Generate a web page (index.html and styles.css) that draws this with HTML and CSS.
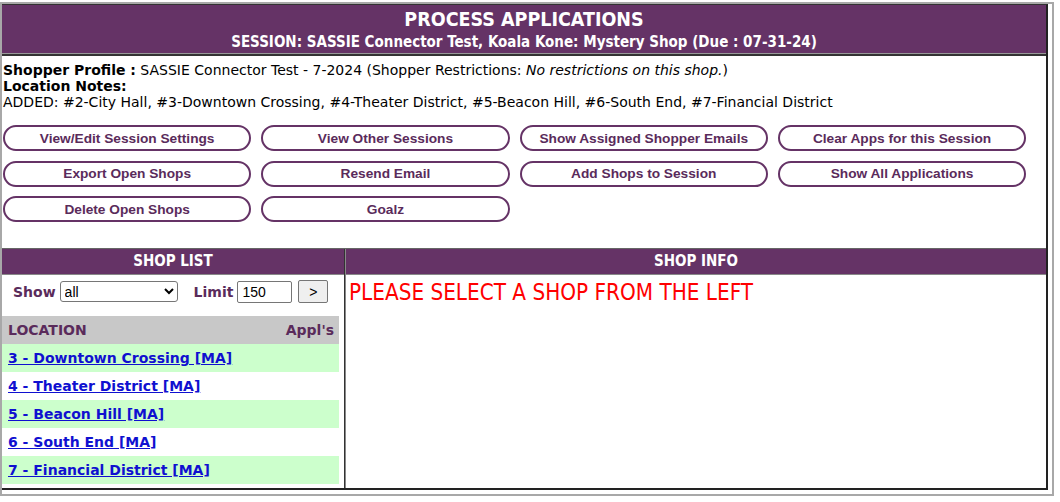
FILE: index.html
```html
<!DOCTYPE html>
<html>
<head>
<meta charset="utf-8">
<title>Process Applications</title>
<link rel="stylesheet" href="styles.css">
</head>
<body>
<div class="frame">
  <div class="main">
    <header class="hdr">
      <div class="title">PROCESS APPLICATIONS</div>
      <div class="sub">SESSION: SASSIE Connector Test, Koala Kone: Mystery Shop (Due : 07-31-24)</div>
    </header>
    <div class="info">
      <div><b>Shopper Profile :</b> SASSIE Connector Test - 7-2024 (Shopper Restrictions: <i>No restrictions on this shop.</i>)</div>
      <div><b>Location Notes:</b></div>
      <div>ADDED: #2-City Hall, #3-Downtown Crossing, #4-Theater District, #5-Beacon Hill, #6-South End, #7-Financial District</div>
    </div>
    <div class="buttons">
      <button class="btn">View/Edit Session Settings</button>
      <button class="btn">View Other Sessions</button>
      <button class="btn">Show Assigned Shopper Emails</button>
      <button class="btn">Clear Apps for this Session</button>
      <button class="btn">Export Open Shops</button>
      <button class="btn">Resend Email</button>
      <button class="btn">Add Shops to Session</button>
      <button class="btn">Show All Applications</button>
      <button class="btn">Delete Open Shops</button>
      <button class="btn">Goalz</button>
    </div>
    <div class="panels">
      <section class="left">
        <div class="phdr">SHOP LIST</div>
        <div class="controls">
          <label class="lbl">Show</label>
          <select class="sel"><option>all</option></select>
          <label class="lbl lim">Limit</label>
          <input class="inp" type="text" value="150">
          <button class="go">&gt;</button>
        </div>
        <div class="list">
          <div class="lhead"><span>LOCATION</span><span>Appl's</span></div>
          <div class="row g"><a href="#">3 - Downtown Crossing [MA]</a></div>
          <div class="row"><a href="#">4 - Theater District [MA]</a></div>
          <div class="row g"><a href="#">5 - Beacon Hill [MA]</a></div>
          <div class="row"><a href="#">6 - South End [MA]</a></div>
          <div class="row g"><a href="#">7 - Financial District [MA]</a></div>
        </div>
      </section>
      <section class="right">
        <div class="phdr">SHOP INFO</div>
        <div class="msg">PLEASE SELECT A SHOP FROM THE LEFT</div>
      </section>
    </div>
  </div>
</div>
</body>
</html>
```
FILE: styles.css
```css
html, body { margin: 0; padding: 0; background: #fff; }
body { padding-top: 2px; font-family: "DejaVu Sans", Verdana, sans-serif; font-size: 14px; color: #000; }

.frame {
  width: 1046px;
  border: 2px solid #a8a8a8;
  padding: 0 4px 4px 0;
}
.main {
  width: 1044px;
  border-top: 1px solid #333;
  border-right: 2px solid #222;
  border-bottom: 2px solid #222;
}

.hdr {
  background: #653366;
  height: 49px;
  color: #fff;
  text-align: center;
  font-family: "DejaVu Sans Condensed", "DejaVu Sans", sans-serif;
  font-stretch: condensed;
  font-weight: bold;
  border-bottom: 1px solid #999;
  box-shadow: 0 2px 0 #333;
  margin-bottom: 2px;
  box-sizing: border-box;
  padding-top: 4px;
}
.title { font-size: 19.5px; line-height: 22px; }
.sub { font-size: 15px; line-height: 19px; margin-top: 2px; }

.info { padding: 6px 0 0 1px; line-height: 16px; }

.buttons {
  display: grid;
  grid-template-columns: repeat(4, 248.3px);
  column-gap: 10px;
  row-gap: 9.5px;
  padding-left: 1px;
  margin-top: 15px;
}
.btn {
  height: 26px;
  background: #fff;
  border: 2px solid #653366;
  border-radius: 13px;
  color: #5a2b5b;
  font-family: "Liberation Sans", Arial, sans-serif;
  font-weight: bold;
  font-size: 13.7px;
  padding: 0;
}

.panels {
  display: flex;
  margin-top: 26px;
  border-top: 1px solid #666;
  height: 239px;
}
.left { width: 342px; border-right: 1px solid #333; box-shadow: 1px 0 0 #888; }
.right { flex: 1; margin-left: 1px; }
.phdr {
  background: #653366;
  color: #fff;
  height: 25px;
  line-height: 25px;
  border-bottom: 1px solid #888;
  text-align: center;
  font-family: "DejaVu Sans Condensed", "DejaVu Sans", sans-serif;
  font-stretch: condensed;
  font-weight: bold;
  font-size: 15px;
}

.controls {
  display: flex;
  align-items: center;
  height: 41px;
  padding-left: 11px;
  box-sizing: border-box;
  padding-bottom: 12px;
  padding-top: 4px;
}
.lbl { color: #5a2b5b; font-weight: bold; font-size: 14px; margin-right: 4px; }
.lim { margin-left: 16px; }
.sel {
  width: 118px;
  height: 21px;
  font-family: "Liberation Sans", Arial, sans-serif;
  font-size: 14px;
  border: 1px solid #767676;
  border-radius: 3px;
  background: #fff;
  color: #000;
}
.inp {
  width: 55px;
  height: 22px;
  box-sizing: border-box;
  border: 1px solid #767676;
  border-radius: 2px;
  font-family: "Liberation Sans", Arial, sans-serif;
  font-size: 14px;
  padding: 1px 4px;
}
.go {
  width: 30px;
  height: 23px;
  margin-left: 6px;
  background: #efefef;
  border: 1px solid #767676;
  border-radius: 2px;
  font-family: "Liberation Sans", Arial, sans-serif;
  font-size: 14px;
  padding: 0;
  color: #000;
}

.list { width: 337px; }
.lhead {
  display: flex;
  justify-content: space-between;
  background: #c8c8c8;
  height: 28px;
  line-height: 28px;
  padding: 0 5px 0 6px;
  color: #5a2b5b;
  font-weight: bold;
}
.row { height: 28px; line-height: 28px; padding-left: 6px; }
.row.g { background: #ccffcc; }
.row a { color: #1010d0; font-weight: bold; text-decoration: underline; }

.msg {
  color: #ff0000;
  font-family: "DejaVu Sans Condensed", "DejaVu Sans", sans-serif;
  font-stretch: condensed;
  font-size: 22.3px;
  line-height: 26px;
  padding: 4px 0 0 3px;
}
```
